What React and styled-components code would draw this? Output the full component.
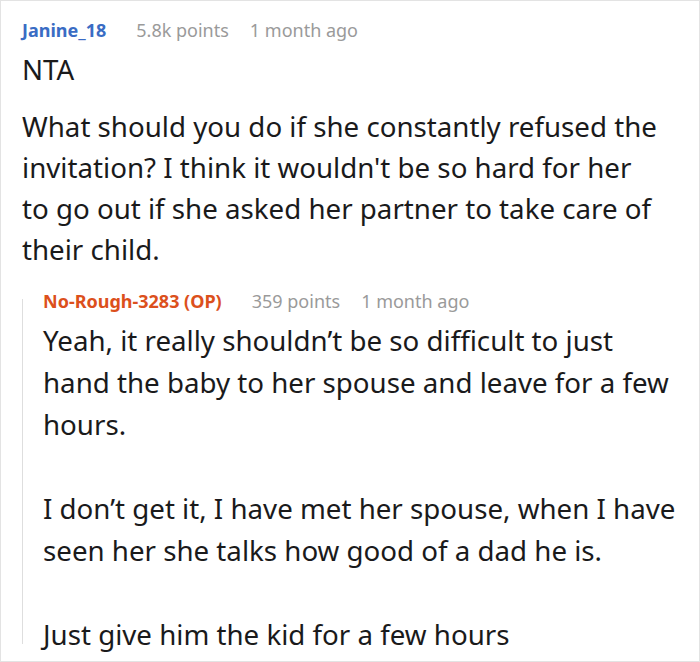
import React from "react"
import styled, { createGlobalStyle } from "styled-components"

const GlobalStyle = createGlobalStyle`
  html, body {
    margin: 0;
    padding: 0;
    background: #ffffff;
  }
  body {
    font-family: "Noto Sans", "Open Sans", sans-serif;
    color: #1a1a1b;
  }
`

const Frame = styled.div`
  box-sizing: border-box;
  width: 700px;
  height: 662px;
  border: 1px solid #e3e3e3;
  padding: 17px 20px 0 21px;
  overflow: hidden;
`

const Meta = styled.div`
  display: flex;
  align-items: baseline;
  font-size: 18px;
  line-height: 24px;
`

const Author = styled.span`
  font-weight: 700;
  color: ${(p) => (p.$op ? "#dc501c" : "#3a6cc4")};
  margin-right: 30px;
`

const Dim = styled.span`
  color: #9a9a9a;
  margin-right: 21px;
`

const Body = styled.div`
  font-size: 27.7px;
  line-height: ${(p) => (p.$reply ? "42px" : "41px")};
  margin-top: ${(p) => (p.$reply ? "6px" : "7px")};
  max-width: ${(p) => (p.$reply ? "640px" : "638px")};

  p {
    margin: 0;
  }

  p + p {
    margin-top: ${(p) => (p.$reply ? "42px" : "16px")};
  }
`

const Reply = styled.div`
  position: relative;
  margin-top: 19px;
  padding-left: 21px;

  &::before {
    content: "";
    position: absolute;
    left: 0;
    top: 10px;
    bottom: 11px;
    width: 1px;
    background: #dedede;
  }
`

const Comment = ({ author, points, time, op, children }) => (
  <div>
    <Meta>
      <Author $op={op}>{author}</Author>
      <Dim>{points}</Dim>
      <Dim>{time}</Dim>
    </Meta>
    {children}
  </div>
)

export default function App() {
  return (
    <>
      <GlobalStyle />
      <Frame>
        <Comment author="Janine_18" points="5.8k points" time="1 month ago">
          <Body>
            <p>NTA</p>
            <p>
              What should you do if she constantly refused the invitation? I
              think it wouldn't be so hard for her to go out if she asked her
              partner to take care of their child.
            </p>
          </Body>
          <Reply>
            <Comment
              author="No-Rough-3283 (OP)"
              points="359 points"
              time="1 month ago"
              op
            >
              <Body $reply>
                <p>
                  Yeah, it really shouldn’t be so difficult to just hand the
                  baby to her spouse and leave for a few hours.
                </p>
                <p>
                  I don’t get it, I have met her spouse, when I have seen her
                  she talks how good of a dad he is.
                </p>
                <p>Just give him the kid for a few hours</p>
              </Body>
            </Comment>
          </Reply>
        </Comment>
      </Frame>
    </>
  )
}
